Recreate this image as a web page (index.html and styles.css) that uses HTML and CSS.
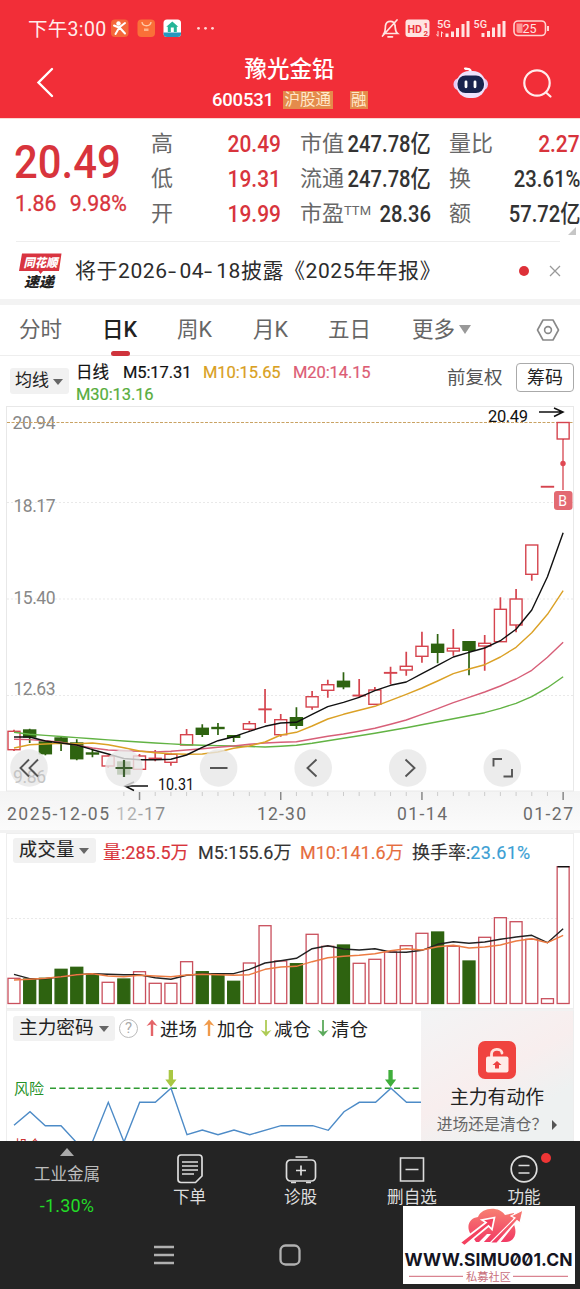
FILE: index.html
```html
<!DOCTYPE html>
<html lang="zh-CN">
<head>
<meta charset="utf-8">
<title>豫光金铅 600531</title>
<link rel="stylesheet" href="styles.css">
</head>
<body>
<div class="phone">
  <header class="header">
    <div class="status">
      <span class="clock">下午3:00</span>
      <svg class="apps" width="100" height="20" viewBox="110 18 100 20">
        <rect x="111" y="19.500" width="17.500" height="17.500" rx="4" fill="#f4683a"/>
        <circle cx="118.500" cy="23.500" r="2.200" fill="#fff"/>
        <path d="M114 25.500l5 2 6-4.500M119 28l-3.500 6M120 28l5 5.500" fill="none" stroke="#fff" stroke-width="2" stroke-linecap="round"/>
        <rect x="137.500" y="19.500" width="17.500" height="17.500" rx="4" fill="#fa7038"/>
        <path d="M142 22c.5 5 8.500 5 9 0" fill="none" stroke="#ffc9a5" stroke-width="1.400"/>
        <path d="M144 28.500h4.500v2.500H144z" fill="#ffb58b"/>
        <rect x="163.500" y="19.500" width="17.500" height="17.500" rx="3.500" fill="#fff"/>
        <path d="M163.500 32.500h17.500v1q0 3.500-3.500 3.500h-10.500q-3.500 0-3.500-3.500z" fill="#2698bd"/>
        <path d="M172.300 21.500l6 5.300h-1.500v5.200h-9v-5.200h-1.500z" fill="#24b597"/><path d="M170.800 27.500h3V32h-3z" fill="#fff"/>
        <g fill="#ffd9d6"><circle cx="198.500" cy="28.300" r="1.400"/><circle cx="205.500" cy="28.300" r="1.400"/><circle cx="212.500" cy="28.300" r="1.400"/></g>
      </svg>
      <svg class="signals" width="170" height="24" viewBox="380 16 170 24">
        <g fill="none" stroke="#ffe4e2" stroke-width="1.700" stroke-linecap="round"><path d="M384 33.500h13.500c-2.500-2-2-5-2.500-8-.7-5.500-8.500-5.500-9.500 0-.3 3 0 6-1.500 8zM388 36.800h4.500M397 20l-14.500 16"/></g>
        <rect x="405.500" y="19.500" width="24" height="17.500" rx="3" fill="#ffe4e2"/>
        <text x="407.500" y="32.500" class="hd" textLength="14.500" lengthAdjust="spacingAndGlyphs">HD</text><text x="423.500" y="27.500" class="tiny">1</text><text x="423.500" y="36" class="tiny">2</text>
        <g class="net"><text x="437" y="28" textLength="14" lengthAdjust="spacingAndGlyphs">5G</text><text x="473.500" y="28" textLength="13.500" lengthAdjust="spacingAndGlyphs">5G</text></g>
        <g stroke="#ffe4e2" stroke-width="3"><path d="M447 37v-3.500M452.500 37v-5.500M457.500 37v-9M463 37V24M468 37V21M483 37v-4M488.500 37v-6M493.500 37v-9.500M499 37V24M504 37V21"/></g>
        <path d="M438 31v5m-1.500-1.500l1.500 2M441.500 37v-5m1.500 1.500l-1.500-2" stroke="#ffe4e2" fill="none"/>
        <rect x="514" y="21" width="31.500" height="14.500" rx="4" fill="none" stroke="#ffd3d0" stroke-width="1.600"/>
        <path d="M516.500 23.500h6v9.500h-4q-2 0-2-2z" fill="#ff9693"/><path d="M548 26v5" stroke="#ffd3d0" stroke-width="2"/>
        <text x="522.500" y="32.800" class="battery" textLength="14">25</text>
      </svg>
    </div>
    <div class="titlebar">
      <svg class="back" width="24" height="36" viewBox="34 64 24 36"><path d="M52 69L38.500 82.500 52 96" fill="none" stroke="#fff" stroke-width="2.400" stroke-linecap="round"/></svg>
      <div class="title">
        <h1>豫光金铅</h1>
        <div class="code"><span>600531</span><em>沪股通</em><em>融</em></div>
      </div>
      <svg class="actions" width="110" height="40" viewBox="450 62 110 40">
        <path d="M466 69q4-1 5 3M465 68.500h1" fill="none" stroke="#fff" stroke-width="2.200" stroke-linecap="round"/>
        <rect x="453.500" y="78" width="34.500" height="12.500" rx="6" fill="#e6c9f4"/>
        <rect x="456.500" y="71" width="29" height="27" rx="12.500" fill="#eee2fc"/>
        <rect x="457.500" y="75.500" width="26.500" height="17.500" rx="8" fill="#18234d"/>
        <path d="M466 81.800v5M475 81.800v5" stroke="#fff" stroke-width="2.800" stroke-linecap="round"/>
        <circle cx="537" cy="83" r="12.700" fill="none" stroke="#ffeceb" stroke-width="2.200"/><path d="M546 92.500l4.500 4" stroke="#ffeceb" stroke-width="2.200" stroke-linecap="round"/>
      </svg>
    </div>
  </header>

  <section class="quote">
    <div class="price">
      <div class="last">20.49</div>
      <div class="change"><span>1.86</span><span>9.98%</span></div>
    </div>
    <dl class="stats">
      <div><dt>高</dt><dd class="up">20.49</dd></div>
      <div><dt>低</dt><dd class="up">19.31</dd></div>
      <div><dt>开</dt><dd class="up">19.99</dd></div>
    </dl>
    <dl class="stats">
      <div><dt>市值</dt><dd>247.78亿</dd></div>
      <div><dt>流通</dt><dd>247.78亿</dd></div>
      <div><dt>市盈<sup>TTM</sup></dt><dd>28.36</dd></div>
    </dl>
    <dl class="stats">
      <div><dt>量比</dt><dd class="up">2.27</dd></div>
      <div><dt>换</dt><dd>23.61%</dd></div>
      <div><dt>额</dt><dd>57.72亿</dd></div>
    </dl>
    <i class="corner"></i>
  </section>

  <section class="notice">
    <svg width="44" height="40" viewBox="18 251 44 40">
      <path d="M22 253.500h39.500l-2.500 17.500h-16l-2.500 3-2-3H19z" fill="#d93440"/>
      <text class="brand" x="23.500" y="267.300" textLength="34" lengthAdjust="spacingAndGlyphs" fill="#fff" font-size="12">同花顺</text>
      <text class="brand" x="24" y="286.500" textLength="30" lengthAdjust="spacingAndGlyphs" fill="#222" font-size="14">速递</text>
    </svg>
    <p>将于2026<b>-</b>04<b>-</b>18披露《2025年年报》</p>
    <i class="dot"></i>
    <svg class="close" width="12" height="12" viewBox="0 0 12 12"><path d="M1 1l10 10M11 1L1 11" stroke="#999" stroke-width="1.300"/></svg>
  </section>

  <nav class="tabs">
    <span>分时</span><span class="active">日K</span><span>周K</span><span>月K</span><span>五日</span><span>更多<i class="caret"></i></span>
    <svg width="24" height="24" viewBox="0 0 24 24"><path d="M7 2h10l5.500 10L17 22H7L1.500 12z" fill="none" stroke="#888" stroke-width="1.600" stroke-linejoin="round"/><circle cx="12" cy="12" r="3.400" fill="none" stroke="#888" stroke-width="1.600"/></svg>
  </nav>

  <section class="averages">
    <span class="chip">均线<i class="caret"></i></span>
    <div class="legend"><span>日线</span><span class="m5">M5:17.31</span><span class="m10">M10:15.65</span><span class="m20">M20:14.15</span><span class="m30">M30:13.16</span></div>
    <span class="adjust">前复权</span>
    <span class="outlined">筹码</span>
  </section>

  <svg class="kline" width="580" height="425" viewBox="0 405 580 425">
    <defs>
      <linearGradient id="axis" x2="0" y2="1"><stop stop-color="#f4f4f4"/><stop offset="1" stop-color="#fbfbfb"/></linearGradient>
      <linearGradient id="fade" gradientUnits="userSpaceOnUse" x1="116" x2="165" y1="0" y2="0"><stop stop-color="#c4c4c4"/><stop offset="1" stop-color="#888"/></linearGradient>
    </defs>
    <rect x="0" y="791" width="580" height="39" fill="url(#axis)"/>
    <rect x="6.500" y="406.500" width="567" height="384.500" fill="#fff" stroke="#e8e8e8"/>
    <path d="M7 502.500h566M7 599h566M7 695.500h566" stroke="#e9e9e9" stroke-dasharray="2 2"/>
    <g class="scale"><text x="12.500" y="428.500" textLength="43">20.94</text><text x="13.500" y="511.500" textLength="42">18.17</text><text x="13.500" y="603.500" textLength="42">15.40</text><text x="13.500" y="695" textLength="42">12.63</text></g>
    <path d="M7 422.500h566" stroke="#c9a263" stroke-dasharray="3 1.500"/>
    <g id="candles"></g>
    <path d="M563 440v50" stroke="#d9525c" stroke-width="1.400"/><circle cx="563" cy="463.500" r="2.700" fill="#e04852"/>
    <rect x="554" y="491" width="18.500" height="19" rx="3" fill="#e36a72"/><text x="558.300" y="506" class="badge">B</text>
    <g id="ma" class="lines"></g>
    <g fill="none" stroke="#111" stroke-width="1.500"><path d="M539 412h23M554 408l9 4-9 4.500M148 786h-23M134 782l-9 4 9 4.500"/></g>
    <g class="mark"><text x="488" y="422" textLength="40">20.49</text><text x="158" y="790" textLength="36" lengthAdjust="spacingAndGlyphs">10.31</text></g>
    <g fill="#e7e7e7" fill-opacity=".8"><circle cx="29" cy="768" r="18.800"/><circle cx="124" cy="768" r="18.800"/><circle cx="218.600" cy="768" r="18.800"/><circle cx="313.200" cy="768" r="18.800"/><circle cx="407.700" cy="768" r="18.800"/><circle cx="502.300" cy="768" r="18.800"/></g>
    <g class="scale"><text x="13" y="782.500" textLength="33" class="faint">9.86</text></g>
    <g fill="none" stroke="#555" stroke-width="1.900"><path d="M29 759.500l-8.500 8.500 8.500 8.500M38 759.500l-8.500 8.500 8.500 8.500M210 768h17.500M316.500 759.500L307.500 768l9 8.500M405.500 759.500l9 8.500-9 8.500M493.500 766.500v-7.500h8.500M512 769v7.500h-8.500"/><path d="M115.500 768h17M124 760v17" stroke="#3d6030" stroke-width="2.200"/></g>
    <g id="ticks"></g>
    <g class="dates"><text x="7" y="819.500" textLength="102">2025-12-05</text><text x="116" y="819.500" textLength="49" fill="url(#fade)">12-17</text><text x="257" y="819.500" textLength="49">12-30</text><text x="397" y="819.500" textLength="50">01-14</text><text x="523" y="819.500" textLength="50">01-27</text></g>
  </svg>

  <section class="volume">
    <div class="volhead"><span class="chip">成交量<i class="caret"></i></span><span class="up">量:285.5万</span><span>M5:155.6万</span><span class="v10">M10:141.6万</span><span>换手率:<b>23.61%</b></span></div>
    <svg width="580" height="142" viewBox="0 866 580 142">
      <path d="M7 918.500h566" stroke="#e9e9e9" stroke-dasharray="2 2"/>
      <g id="bars"></g><g id="vma" class="lines"></g>
      <path d="M557.500 866.700h12" stroke="#111" stroke-width="1.500"/>
    </svg>
  </section>

  <section class="signal">
    <div class="signalmain">
      <div class="sighead">
        <span class="chip">主力密码<i class="caret"></i></span><span class="help">?</span>
        <svg width="12" height="20" viewBox="0 0 12 20"><path d="M6 18V5" stroke="#e46468" stroke-width="2.400"/><path d="M.5 8L6 1.500 11.500 8 6 6z" fill="#e46468"/></svg><span>进场</span>
        <svg width="12" height="20" viewBox="0 0 12 20"><path d="M6 18V5" stroke="#f09a4a" stroke-width="2.400"/><path d="M.5 8L6 1.500 11.500 8 6 6z" fill="#f09a4a"/></svg><span>加仓</span>
        <svg width="12" height="20" viewBox="0 0 12 20"><path d="M6 2v13" stroke="#aecb55" stroke-width="1.800"/><path d="M.5 12L6 18.500 11.500 12 6 14z" fill="#aecb55"/></svg><span>减仓</span>
        <svg width="12" height="20" viewBox="0 0 12 20"><path d="M6 2v13" stroke="#5caa5c" stroke-width="1.800"/><path d="M.5 12L6 18.500 11.500 12 6 14z" fill="#5caa5c"/></svg><span>清仓</span>
      </div>
      <svg class="sigchart" width="414" height="94" viewBox="7 1047 414 94">
        <path d="M50 1088.300h371" stroke="#2f9a32" stroke-width="1.500" stroke-dasharray="6 3.300"/>
        <path d="M14 1125.300L30 1111.700 45.300 1125.700H61L77 1143H92L108.300 1102.300 124 1142 139.700 1102.300H155.300L171 1088.300 187 1134.700 202.300 1130 218 1134.700 234 1130 249.700 1134.700 281 1125.700H312.700L328.300 1130.300 344 1111.700 359.300 1102.300H375.600L391 1088.300 406.500 1102.300H421" fill="none" stroke="#4d8bc7" stroke-width="1.400"/>
        <path d="M168.700 1070h4.300v9.500h3.500l-5.600 7.500-5.600-7.500h3.400z" fill="#a9c743"/><path d="M388.400 1070h4.300v9.500h3.500l-5.600 7.500-5.600-7.500h3.400z" fill="#3fae3b"/>
        <text x="14" y="1093.500" fill="#259128" font-size="15" textLength="30">风险</text><text x="14" y="1149.500" fill="#c33" font-size="14" textLength="28">机会</text>
      </svg>
    </div>
    <aside class="promo">
      <svg width="38" height="38" viewBox="0 0 38 38"><rect width="38" height="38" rx="7" fill="#f0433f"/><path d="M13.500 16v-3c0-6 10-6 10.500-1" fill="none" stroke="#ffe1dc" stroke-width="2.800" stroke-linecap="round"/><rect x="8" y="15.500" width="22.500" height="16" rx="2" fill="#ffece8"/><path d="M19 20l4.500 4h-2.500v3.500h-4V24h-2.500z" fill="#ed4141"/></svg>
      <strong>主力有动作</strong>
      <p>进场还是清仓？<i></i></p>
    </aside>
  </section>

  <footer class="dock">
    <div class="menu">
      <div class="sector"><i></i><span>工业金属</span><b>-1.30%</b></div>
      <div class="item"><svg width="30" height="32" viewBox="0 0 30 32"><path d="M6 2h18q3 0 3 3v18l-6.500 6.500H6q-3 0-3-3V5q0-3 3-3z" fill="none" stroke="#ddd" stroke-width="1.700"/><path d="M7 9h16M7 13h16M7 17h16M7 21h12" stroke="#ddd" stroke-width="1.500"/></svg><span>下单</span></div>
      <div class="item"><svg width="34" height="32" viewBox="0 0 34 32"><rect x="2.500" y="7" width="29" height="21" rx="4" fill="none" stroke="#ddd" stroke-width="1.700"/><path d="M11.500 4h12M7 29.500h5M22 29.500h5M17 12.500v10M12 17.500h10" stroke="#ddd" stroke-width="1.700"/></svg><span>诊股</span></div>
      <div class="item"><svg width="30" height="32" viewBox="0 0 30 32"><path d="M3.500 5h23v23h-23zM8.500 16.500h13" fill="none" stroke="#ddd" stroke-width="1.600"/></svg><span>删自选</span></div>
      <div class="item more"><svg width="30" height="32" viewBox="0 0 30 32"><circle cx="15" cy="16" r="12.800" fill="none" stroke="#ddd" stroke-width="1.700"/><path d="M9.500 12.500h11M9.500 20h11" stroke="#ddd" stroke-width="1.700"/></svg><span>功能</span><i></i></div>
    </div>
    <div class="system">
      <svg width="22" height="22" viewBox="0 0 22 22"><path d="M1 3h20M1 11h20M1 19h20" stroke="#b0b0b0" stroke-width="2.300"/></svg>
      <svg width="22" height="22" viewBox="0 0 22 22"><rect x="1.500" y="1.500" width="19" height="19" rx="5" fill="none" stroke="#b0b0b0" stroke-width="2.300"/></svg>
    </div>
    <div class="watermark">
      <svg width="172" height="78" viewBox="403 1206 172 78">
        <defs><linearGradient id="cloud" gradientUnits="userSpaceOnUse" x1="0" x2="0" y1="1209" y2="1245"><stop stop-color="#f77f72"/><stop offset="1" stop-color="#f13463"/></linearGradient></defs>
        <path d="M470 1233c-4-8 0-15 8-16 4-10 21-11 27-2l9-2-1 10c4 6 4 18-7 19h-30z" fill="url(#cloud)"/>
        <path d="M460 1242.500l26-20-4-2.500 12.500-2.500-2.500 12-3.500-3.500-24 20z" fill="#f4415f" stroke="#fff" stroke-width="1.700"/>
        <path d="M478 1243l9-9h4l-8 9zM492 1243.500l22-24 2.500 2.500-17 21.500z" fill="#fff"/>
        <path d="M490 1243l25-25-4-2 12 -6-3 13-3-2.500-20 22.500z" fill="url(#cloud)" stroke="#fff" stroke-width="1.200"/>
        <text class="site" x="404.500" y="1265.800" textLength="168">WWW.SIMU001.CN</text>
        <path d="M409 1276.300h54M513 1276.300h55" stroke="#d98491" stroke-width="1.200"/>
        <text x="466" y="1280.500" textLength="45" fill="#c96f7c" font-size="11.200">私募社区</text>
      </svg>
    </div>
  </footer>
</div>
<script src="charts.js"></script>
</body>
</html>
```

FILE: styles.css
```css
* { box-sizing: border-box; }
body, h1, p, dl, dd { margin: 0; }
body { width: 580px; font-family: Roboto, "Noto Sans CJK SC", sans-serif; color: #333; background: #fff; }
svg { display: block; flex: none; }
i, em { font-style: normal; }
span { white-space: nowrap; }
.phone { width: 580px; height: 1289px; overflow: hidden; display: flex; flex-direction: column; }
.phone > * { flex: none; }
.up { color: #d8343c; }

.header { height: 118px; background: #f22e38; color: #fff; }
.status { height: 56px; display: flex; align-items: center; padding: 0 30px 0 28px; }
.clock { width: 82px; font-size: 19.500px; letter-spacing: .3px; color: #ffeceb; margin-top: -2px; }
.apps { overflow: visible; }
.signals { margin-left: auto; }
.hd { font-size: 11.500px; font-weight: 700; fill: #e8333c; }
.tiny { font-size: 8px; font-weight: 700; fill: #e8333c; }
.net { font-size: 10.500px; font-weight: 500; fill: #ffe4e2; }
.battery { font-size: 12.500px; fill: #ffe4e2; }
.titlebar { height: 62px; display: grid; grid-template-columns: 24px 1fr 110px; padding: 0 20px 0 34px; align-items: start; }
.back { margin-top: 8px; }
.title { display: flex; flex-direction: column; align-items: center; padding-left: 72px; }
.title h1 { font-size: 22.500px; line-height: 26px; font-weight: 500; margin-right: 1px; }
.code { display: flex; align-items: center; height: 36px; font-size: 18.500px; font-weight: 500; line-height: 20px; }
.code span { width: 71px; letter-spacing: -.2px; }
.code em { font-size: 15.500px; line-height: 18px; height: 18px; padding: 0 1.500px; background: #e48b4c; color: #ffe9cc; font-weight: 400; margin-right: 17px; }
.code em:last-child { margin-right: 0; }
.actions { margin-top: 6px; }

.quote { position: relative; height: 124px; display: grid; grid-template-columns: 136px 130px 130px 130px; padding-left: 15px; border-top: 1px solid #fbd9d3; }
.quote::after { content: ""; position: absolute; left: 16px; right: 20px; bottom: 0; height: 1px; background: #eee; }
.price { color: #d8343c; }
.last { font-size: 47px; line-height: 50px; font-weight: 500; margin: 18px 0 0 -1px; transform: scaleX(.89); transform-origin: left; }
.change { display: flex; gap: 14px; margin-top: 3px; font-size: 22.500px; line-height: 26px; transform: scaleX(.945); transform-origin: left; -webkit-text-stroke: .3px; }
.stats { padding-top: 7px; }
.stats + .stats { margin-left: 20px; width: 130px; }
.stats + .stats + .stats { margin-left: 39px; }
.stats div { height: 35px; display: flex; align-items: center; justify-content: space-between; }
.stats dt { font-size: 22px; line-height: 34px; color: #686868; white-space: nowrap; }
.stats dd { font-size: 23.500px; font-weight: 500; line-height: 34px; white-space: nowrap; transform: scaleX(.86); transform-origin: right; }
.stats dd.up { transform: scaleX(.89); }
.stats + .stats dt { margin-right: -12px; margin-left: -1px; }
.stats sup { font-size: 13px; vertical-align: 6px; line-height: 1; }
.corner { position: absolute; right: 4px; bottom: 7px; border: 4px solid; border-color: transparent #c6c6c6 #c6c6c6 transparent; }

.notice { height: 63px; border-bottom: 6px solid #f3f3f3; padding-left: 18px; display: flex; align-items: center; }
.notice p { font-size: 21px; letter-spacing: .55px; line-height: 30px; margin-left: 13px; width: 444px; white-space: nowrap; color: #2c2c2c; }
.notice b { display: inline-block; font-weight: 400; width: 12px; transform: scaleX(1.4); transform-origin: left; }
.brand { font-family: "Noto Sans CJK SC", sans-serif; font-weight: 900; font-style: italic; }
.dot { width: 10px; height: 10px; border-radius: 50%; background: #dd3038; }
.close { margin-left: 20px; }

.tabs { height: 51px; border-bottom: 1px solid #eee; display: grid; grid-template-columns: 83px 75px 76px 75px 84px 124px 1fr; padding-left: 19px; align-items: center; font-size: 21.500px; line-height: 50px; color: #666; }
.tabs span { position: relative; }
.tabs .active { font-weight: 500; color: #222; }
.tabs .active::after { content: ""; position: absolute; left: 9px; top: 46px; width: 19px; height: 5px; border-radius: 3px; background: #cf333c; }
.caret { display: inline-block; border: 5px solid transparent; border-top: 6px solid #666; border-bottom: 0; vertical-align: middle; margin-left: 6px; }
.tabs .caret { border-width: 9px 6px 0; border-top-color: #999; margin-left: 4px; margin-top: -3px; }

.averages { height: 49px; display: grid; grid-template-columns: 59px 371px 69px 58px; padding-left: 10px; align-items: start; font-size: 17px; }
.chip { background: #f1f1f1; border-radius: 3px; color: #222; }
.averages .chip { margin: 12px 0 0; width: 59px; height: 26px; line-height: 25px; padding-left: 5px; }
.averages .caret { margin-left: 4px; }
.legend { display: grid; grid-template-columns: 47px 80px 90px 90px; margin: 6px 0 0 7px; line-height: 22px; font-size: 16.500px; letter-spacing: -.1px; color: #111; -webkit-text-stroke: .2px; }
.m10 { color: #d9a021; } .m20 { color: #dc5c74; } .m30 { color: #57ad3d; grid-column: 1 / 3; }
.adjust { font-size: 18.500px; line-height: 26px; margin-top: 9px; margin-left: 7px; color: #555; }
.outlined { margin: 7px 0 0 7px; height: 29px; width: 58px; border: 1px solid #aaa; border-radius: 4px; font-size: 18px; line-height: 27px; text-align: center; color: #222; }

.scale { font-size: 17.500px; fill: #888; } .scale .faint { fill: #c4c4c4; }
.mark { font-size: 16.500px; fill: #111; }
.badge { font-size: 14px; fill: #fff; }
.lines { fill: none; stroke-width: 1.400px; stroke-linejoin: round; }
.dates { font-size: 17.500px; fill: #6c6c6c; }

.volume { height: 179px; border-top: 3px solid #f2f2f2; position: relative; }
.volume::before { content: ""; position: absolute; left: 6px; right: 6px; top: 0; bottom: 0; border: 1px solid #eee; }
.volhead { height: 33px; position: relative; display: grid; grid-template-columns: 90px 95px 102px 112px 1fr; padding: 2px 0 0 13px; align-items: center; font-size: 18px; -webkit-text-stroke: .15px; }
.volume .chip { width: 83px; height: 25px; line-height: 24px; padding-left: 6px; letter-spacing: .6px; }
.volhead .caret { margin-left: 4px; }
.v10 { color: #e66d3c; } .volhead b { font-weight: 400; color: #3c9fd4; letter-spacing: .3px; }

.signal { height: 132px; margin: 0 6px; overflow: hidden; border: 1px solid #eee; border-top: 2px solid #f2f2f2; border-bottom: 0; display: grid; grid-template-columns: 414px 1fr; }
.sighead { height: 36px; display: flex; align-items: center; padding: 0 0 2px 6px; font-size: 18.500px; color: #222; }
.sighead .chip { height: 25px; width: 102px; line-height: 24px; padding-left: 6px; font-size: 18.700px; }
.sighead .caret { margin-left: 5px; }
.help { width: 19px; height: 19px; border: 1.500px solid #bbb; border-radius: 50%; margin: 0 8px 0 4px; text-align: center; font-size: 15px; line-height: 16px; color: #aaa; }
.sighead svg { margin-right: 2px; } .sighead span + svg { margin-left: 6px; } .sighead .help + svg { margin-left: 0; }
.promo { background: linear-gradient(150deg, #f3f4f5, #f8eeee 48%, #eef1f1 75%); display: flex; flex-direction: column; align-items: center; padding-top: 30px; }
.promo strong { font-size: 18.800px; line-height: 26px; font-weight: 400; color: #222; margin-top: 6px; }
.promo p { font-size: 15.800px; line-height: 25px; color: #666; margin-top: 1px; white-space: nowrap; margin-left: 0; }
.promo i { display: inline-block; border: 5px solid transparent; border-left-color: #555; border-right: 0; margin-left: 5px; }

.dock { position: relative; height: 148px; background: #242424; color: #ddd; }
.menu { height: 84px; display: grid; grid-template-columns: 134px 111px 111px 112px 112px; }
.menu > div { display: flex; flex-direction: column; align-items: center; position: relative; font-size: 16.600px; }
.sector { color: #bdbdbd; }
.sector i { border: 7px solid transparent; border-bottom: 8px solid #aaa; border-top: 0; margin-top: 7px; }
.sector span { line-height: 24px; margin-top: 7px; }
.sector b { font-weight: 400; color: #23dc27; font-size: 18px; line-height: 22px; margin-top: 8px; letter-spacing: .2px; }
.item svg { margin-top: 12px; }
.item span { line-height: 24px; margin-top: 1px; }
.more i { position: absolute; width: 10px; height: 10px; border-radius: 50%; background: #ee3535; left: 73px; top: 12px; }
.system { display: flex; gap: 104px; padding: 19px 0 0 153px; }
.watermark { position: absolute; left: 403px; top: 65px; background: #fff; }
.site { font-family: Inter, sans-serif; font-weight: 700; font-size: 17.500px; fill: #15141f; font-feature-settings: "zero"; }
```

FILE: charts.js
```js
const X = i => 14 + i * 15.69;
const RED = '#d5444e', GREEN = '#2e6310';

// [direction, high, body top, body bottom, low]
const candles = [
  ['r',729.7,731.3,749.7,751],['g',728.7,730,737,743],['g',742,742,753.7,755.3],['g',736,738,743,751],
  ['g',739.3,743,758.7,760.3],['g',748.3,753,754,757.3],['r',755.3,756,766,767.7],['g',759.7,762,774,777],
  ['r',754,756,769.3,769.3],['r',750,758.3,758.8,761.3],['r',752.7,754.3,762.3,765.7],['r',729,734.7,745,745],
  ['g',724.3,728.3,734.3,737],['g',723,727.5,728.5,735],['g',735,735.7,737.3,742],['r',721,723.7,729.3,730.7],
  ['r',689,709.1,709.6,723],['r',714,719.7,734.7,736.7],['g',707.3,717.7,725.3,729],['r',691,696.7,707,709.7],
  ['r',679.7,684.7,690.3,697.7],['g',672.3,681.3,686.7,689.3],['r',679,695.3,695.8,697.5],['r',687,690,704.3,704.3],
  ['r',666.7,672.6,673.1,684.3],['r',651.7,666.3,670,675.7],['r',631.7,646.3,656.3,662.7],['g',634,644.3,652.3,663.3],
  ['r',629,648.3,651,655.7],['g',641.7,641.7,650.3,675.3],['r',635,643.3,646,670.7],['r',597.3,609.3,641.7,641.7],
  ['r',589,599,625,632.3],['r',545,545,574.3,580.7],['r',486.5,486.5,487,487],['r',422.5,422.5,439,440]
];
document.getElementById('candles').innerHTML = candles.map(([c, h, t, b, l], i) => {
  const x = X(i), col = c === 'r' ? RED : GREEN;
  return `<path d="M${x} ${h}V${t}M${x} ${b}V${l}" stroke="${col}" stroke-width="1.7"/>` +
    `<rect x="${x - 6}" y="${t}" width="12" height="${b - t}" fill="${c === 'r' ? 'none' : GREEN}" stroke="${col}" stroke-width="1.4"/>`;
}).join('');

const line = (ys, color) => `<polyline points="${ys.map((y, i) => X(i) + ',' + y).join(' ')}" stroke="${color}"/>`;
document.getElementById('ma').innerHTML =
  line([732.3,734.3,735.4,736.5,737.6,738.7,739.9,741,742,743,743.9,744.7,745.2,745.6,746,746.5,747,746.3,745.3,743.3,740.8,738.3,735.8,733.3,730.5,727.7,724.7,721.7,718.7,715.7,712.7,708.3,703.3,696.7,687.7,676.7], '#62b344') +
  line([739.3,739.6,740.7,742.3,745.3,748,750,750.7,751.3,752,751.3,750,748.7,747.3,746,744.3,743,742.3,741.7,739,736.3,734,731.3,728.3,724.3,720,714.3,708.7,702.7,697.3,692,686,679,670.3,657.3,642.3], '#d75f78') +
  line([748,744.7,744,743.3,743.7,743,744.7,747.7,751,752.7,753.7,754.3,754,752,748.3,746,742,735,732.3,726,719,714.3,710.3,706.3,700.3,694.3,688,681,673.7,669,664.7,657,647.3,632.7,614.3,590.7], '#dba126') +
  line([737,737,741,743,745,749.7,754,758.5,759.7,759.7,759.3,755,747.3,740.7,736.7,731.3,726.3,723,722.3,714.3,706.7,702.3,697.3,690.7,685.3,682,673.7,665.3,657,652.3,648,640.7,629.3,610,576.7,532.7], '#111');

document.getElementById('ticks').innerHTML = candles.map((_, i) => {
  if (i < 7) return '';
  const major = i % 9 === 8;
  return `<path d="M${X(i)} 792v${major ? 8 : 4}" stroke="${major ? '#888' : '#ccc'}" stroke-width="${major ? 1.5 : 1}"/>`;
}).join('');

const greenBars = [1,2,3,4,5,7,12,13,14,18,21,27,29];
const tops = [978.3,979,978.3,969.3,967.3,974.5,982.3,979,971.7,983.3,983.3,961.7,971.7,973.7,981.3,963,925.7,961,963.7,934.3,946.3,945,963.3,959.3,952,945.7,933.3,932,946.3,961,937.3,917.7,921.7,939.3,998.7,866.5];
document.getElementById('bars').innerHTML = tops.map((t, i) => {
  const g = greenBars.includes(i);
  return `<rect x="${X(i) - 6}" y="${t}" width="12" height="${1003.5 - t}" fill="${g ? GREEN : '#fff'}" stroke="${g ? GREEN : '#c94f5c'}" stroke-width="1.3"/>`;
}).join('');
document.getElementById('vma').innerHTML =
  line([974.3,978.7,978.7,976.7,974.7,973.7,974.3,974.7,974.7,977.7,979.3,975.3,974,973.7,973.7,969.3,963,960.7,958.3,948.7,945.7,949,950,948.7,952,952.3,950.3,944.3,941.7,943.3,942,939.3,937,935.3,942.7,928.7], '#222') +
  line([980,979.3,978.3,976.7,974.7,973.7,976,976.7,975.3,976,976.7,975,974.3,974.7,975.3,974.7,969.3,967,966.3,961.7,957.7,956.3,955.3,953.7,950.7,948.7,950,946.7,945.3,948,947,945,941,938.7,942.7,935.3], '#ec7b42');
```
